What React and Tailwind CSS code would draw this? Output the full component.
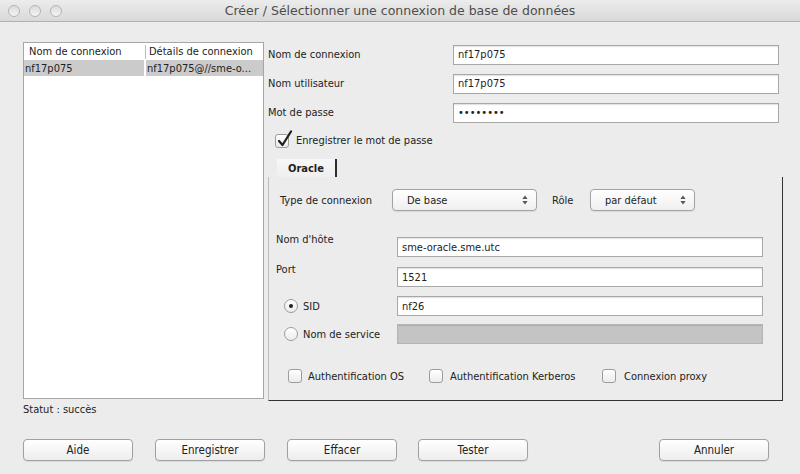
import React from 'react'

const font = "font-['DejaVu_Sans_Condensed','DejaVu_Sans',sans-serif]"

const TextField = ({ value, className = '', disabled }) => (
  <div
    className={`h-[20px] border border-[#a8a8a8] shadow-[inset_0_1px_1px_rgba(0,0,0,0.12)] flex items-center px-[4px] ${disabled ? 'bg-[#c4c4c4]' : 'bg-white'} ${className}`}
  >
    {value}
  </div>
)

const Arrows = () => (
  <svg width="6" height="10" viewBox="0 0 6 10" className="shrink-0">
    <path d="M3 0.5 L5.6 4 H0.4 Z" fill="#555" />
    <path d="M3 9.5 L5.6 6 H0.4 Z" fill="#555" />
  </svg>
)

const Popup = ({ value, className = '' }) => (
  <div
    className={`h-[22px] rounded-[4px] border border-[#a3a3a3] bg-gradient-to-b from-white to-[#efefef] shadow-[0_1px_1px_rgba(0,0,0,0.08)] flex items-center justify-between pl-[14px] pr-[8px] ${className}`}
  >
    <span>{value}</span>
    <Arrows />
  </div>
)

const CheckBox = ({ checked }) => (
  <div className="relative w-[14px] h-[14px] shrink-0 rounded-[3px] border border-[#9c9c9c] bg-gradient-to-b from-white to-[#ececec]">
    {checked && (
      <svg width="16" height="18" viewBox="0 0 16 18" className="absolute left-[1px] -top-[5px]">
        <path d="M2 11 L5.5 15 L14 1.5" stroke="#1e1e1e" strokeWidth="2.2" fill="none" strokeLinecap="round" strokeLinejoin="round" />
      </svg>
    )}
  </div>
)

const Radio = ({ checked }) => (
  <div className="w-[14px] h-[14px] shrink-0 rounded-full border border-[#9c9c9c] bg-gradient-to-b from-white to-[#ececec] flex items-center justify-center">
    {checked && <div className="w-[4px] h-[4px] rounded-full bg-[#222]" />}
  </div>
)

const Button = ({ children, className = '' }) => (
  <div
    className={`w-[110px] h-[22px] rounded-[4px] border border-[#a0a0a0] bg-gradient-to-b from-white to-[#ededed] shadow-[0_1px_1px_rgba(0,0,0,0.08)] flex items-center justify-center text-[11.5px] text-[#222] ${className}`}
  >
    {children}
  </div>
)

const Light = () => (
  <div className="w-[12px] h-[12px] rounded-full border border-[#b4b4b4] bg-gradient-to-b from-[#dcdcdc] to-[#f4f4f4]" />
)

export default function App() {
  const fields = [
    { label: 'Nom de connexion', value: 'nf17p075' },
    { label: 'Nom utilisateur', value: 'nf17p075' },
    { label: 'Mot de passe', value: '••••••••' }
  ]

  return (
    <div className={`w-[800px] h-[474px] bg-[#ececec] flex flex-col overflow-hidden text-[11px] leading-[13px] text-[#222] ${font}`}>
      {/* barre de titre */}
      <div className="relative h-[22px] shrink-0 border-b border-[#b1b1b1] bg-gradient-to-b from-[#ececec] to-[#d9d9d9] flex items-center justify-center">
        <div className="absolute left-[8px] top-[5px] flex gap-[9px]">
          <Light />
          <Light />
          <Light />
        </div>
        <span className="font-['DejaVu_Sans',sans-serif] text-[12.5px] text-[#4d4d4d]">
          Créer / Sélectionner une connexion de base de données
        </span>
      </div>

      <div className="flex pl-[23px] pt-[20px]">
        {/* liste des connexions */}
        <div className="w-[241px] h-[357px] border border-[#a6a6a6] bg-white flex flex-col">
          <div className="flex h-[17px] items-center">
            <div className="w-[121px] pl-[5px]">Nom de connexion</div>
            <div className="h-[14px] w-px bg-[#bdbdbd]" />
            <div className="pl-[3px]">Détails de connexion</div>
          </div>
          <div className="flex h-[16px] gap-[2px] items-center">
            <div className="w-[120px] h-full bg-[#cbcbcb] pl-[1px] flex items-center">nf17p075</div>
            <div className="flex-1 h-full bg-[#cbcbcb] pl-[1px] flex items-center whitespace-nowrap overflow-hidden">nf17p075@//sme-o...</div>
          </div>
        </div>

        {/* formulaire */}
        <div className="ml-[4px] w-[515px] flex flex-col pt-[3px]">
          <div className="flex flex-col gap-[10px] pr-[4px]">
            {fields.map((f) => (
              <div key={f.label} className="flex items-center h-[19px]">
                <div className="flex-1">{f.label}</div>
                <TextField value={f.value} className="w-[326px] h-[19px]" />
              </div>
            ))}
          </div>

          <div className="flex items-center h-[17px] mt-[10px] pl-[7px] gap-[7px]">
            <CheckBox checked />
            <span>Enregistrer le mot de passe</span>
          </div>

          <div className="mt-[10px] pl-[9px] flex">
            <div className="w-[60px] h-[18px] bg-gradient-to-b from-[#f7f7f7] to-[#efefef] border-r-[2px] border-[#2e2e2e] flex items-center justify-center font-bold">
              Oracle
            </div>
          </div>

          {/* panneau Oracle */}
          <div className="h-[224px] border-l border-l-[#bdbdbd] border-r border-r-[#333] border-b border-b-[#333] flex flex-col pt-[12px]">
            <div className="flex items-center pl-[11px]">
              <div className="w-[112px]">Type de connexion</div>
              <Popup value="De base" className="w-[145px]" />
              <div className="ml-[15px] w-[38px]">Rôle</div>
              <Popup value="par défaut" className="w-[105px]" />
            </div>

            <div className="flex items-start mt-[22px]">
              <div className="w-[128px] pl-[7px]">Nom d'hôte</div>
              <TextField value="sme-oracle.sme.utc" className="w-[366px] mt-[4px]" />
            </div>

            <div className="flex items-start mt-[6px]">
              <div className="w-[128px] pl-[7px]">Port</div>
              <TextField value="1521" className="w-[366px] mt-[4px]" />
            </div>

            <div className="flex items-center mt-[9px]">
              <div className="w-[128px] pl-[15px] flex items-center gap-[5px]">
                <Radio checked />
                <span>SID</span>
              </div>
              <TextField value="nf26" className="w-[366px]" />
            </div>

            <div className="flex items-center mt-[8px]">
              <div className="w-[128px] pl-[15px] flex items-center gap-[5px]">
                <Radio />
                <span>Nom de service</span>
              </div>
              <TextField value="" disabled className="w-[366px] border-[#b5b5b5]" />
            </div>

            <div className="flex items-center mt-[24px] pl-[19px] h-[16px]">
              <div className="w-[141px] flex items-center gap-[6px]">
                <CheckBox />
                <span>Authentification OS</span>
              </div>
              <div className="w-[173px] flex items-center gap-[7px]">
                <CheckBox />
                <span>Authentification Kerberos</span>
              </div>
              <div className="flex items-center gap-[8px]">
                <CheckBox />
                <span>Connexion proxy</span>
              </div>
            </div>
          </div>
        </div>
      </div>

      <div className="pl-[23px] mt-[2px]">Statut : succès</div>

      {/* boutons */}
      <div className="flex items-center pl-[23px] pr-[31px] mt-[23px]">
        <Button>Aide</Button>
        <Button className="ml-[22px]">Enregistrer</Button>
        <Button className="ml-[22px]">Effacer</Button>
        <Button className="ml-[21px]">Tester</Button>
        <Button className="ml-auto">Annuler</Button>
      </div>
    </div>
  )
}
